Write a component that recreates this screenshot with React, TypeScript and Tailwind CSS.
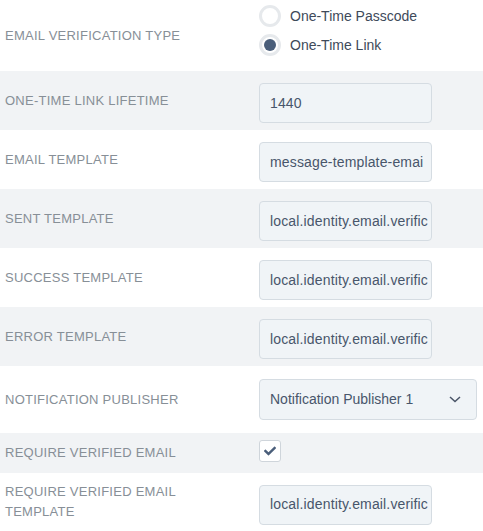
import { FaCheck } from "react-icons/fa";

const font = { fontFamily: '"Liberation Sans", Arial, sans-serif' };

function TextBox({ value }: { value: string }) {
  return (
    <div className="mt-[5px] flex h-[40px] w-[173px] items-center overflow-hidden whitespace-nowrap rounded-[4px] border border-[#d5dce2] bg-[#f0f4f7] pl-[10px] pr-[2px] text-[14px] tracking-[0.15px] text-[#48566b]">
      {value}
    </div>
  );
}

function Radio({ label, checked }: { label: string; checked?: boolean }) {
  return (
    <div className="flex h-[22px] items-center gap-[9px]">
      <span className="flex h-[22px] w-[22px] items-center justify-center rounded-full border-[3px] border-[#e6e9ec] bg-white">
        {checked && <span className="h-[12px] w-[12px] rounded-full bg-[#4a5e7a]" />}
      </span>
      <span className="text-[14px] text-[#3e4a5a]">{label}</span>
    </div>
  );
}

function Row({
  label,
  gray,
  height,
  children,
}: {
  label: string;
  gray?: boolean;
  height: string;
  children: React.ReactNode;
}) {
  return (
    <div className={`flex items-center ${height} ${gray ? "bg-[#f1f3f5]" : "bg-white"}`}>
      <div className="w-[259px] shrink-0 pl-[5px] pr-[60px] text-[13px] leading-[20px] tracking-[0.25px] text-[#878f97]">
        {label}
      </div>
      {children}
    </div>
  );
}

export default function App() {
  return (
    <div className="w-[483px] bg-white" style={font}>
      <div className="flex h-[71px] bg-white">
        <div className="w-[259px] shrink-0 self-center pl-[5px] text-[13px] leading-[20px] tracking-[0.25px] text-[#878f97]">
          EMAIL VERIFICATION TYPE
        </div>
        <div className="flex flex-col gap-[7px] pt-[5px]">
          <Radio label="One-Time Passcode" />
          <Radio label="One-Time Link" checked />
        </div>
      </div>

      <Row label="ONE-TIME LINK LIFETIME" gray height="h-[59px]">
        <TextBox value="1440" />
      </Row>
      <Row label="EMAIL TEMPLATE" height="h-[59px]">
        <TextBox value="message-template-emai" />
      </Row>
      <Row label="SENT TEMPLATE" gray height="h-[59px]">
        <TextBox value="local.identity.email.verific" />
      </Row>
      <Row label="SUCCESS TEMPLATE" height="h-[59px]">
        <TextBox value="local.identity.email.verific" />
      </Row>
      <Row label="ERROR TEMPLATE" gray height="h-[59px]">
        <TextBox value="local.identity.email.verific" />
      </Row>

      <Row label="NOTIFICATION PUBLISHER" height="h-[67px]">
        <div className="flex h-[41px] w-[218px] items-center justify-between rounded-[4px] border border-[#d5dce2] bg-[#f0f4f7] pl-[10px] pr-[15px] text-[14px] text-[#48566b]">
          <span>Notification Publisher 1</span>
          <svg width="12" height="7" viewBox="0 0 12 7" fill="none">
            <path d="M1 1L6 5.5L11 1" stroke="#4a5568" strokeWidth="1.5" />
          </svg>
        </div>
      </Row>

      <Row label="REQUIRE VERIFIED EMAIL" gray height="h-[40px]">
        <div className="mb-[5px] flex h-[22px] w-[22px] items-center justify-center rounded-[3px] border border-[#cfd5db] bg-white text-[#4a5e7a]">
          <FaCheck size={12} />
        </div>
      </Row>

      <Row label="REQUIRE VERIFIED EMAIL TEMPLATE" height="h-[58px]">
        <TextBox value="local.identity.email.verific" />
      </Row>
    </div>
  );
}
